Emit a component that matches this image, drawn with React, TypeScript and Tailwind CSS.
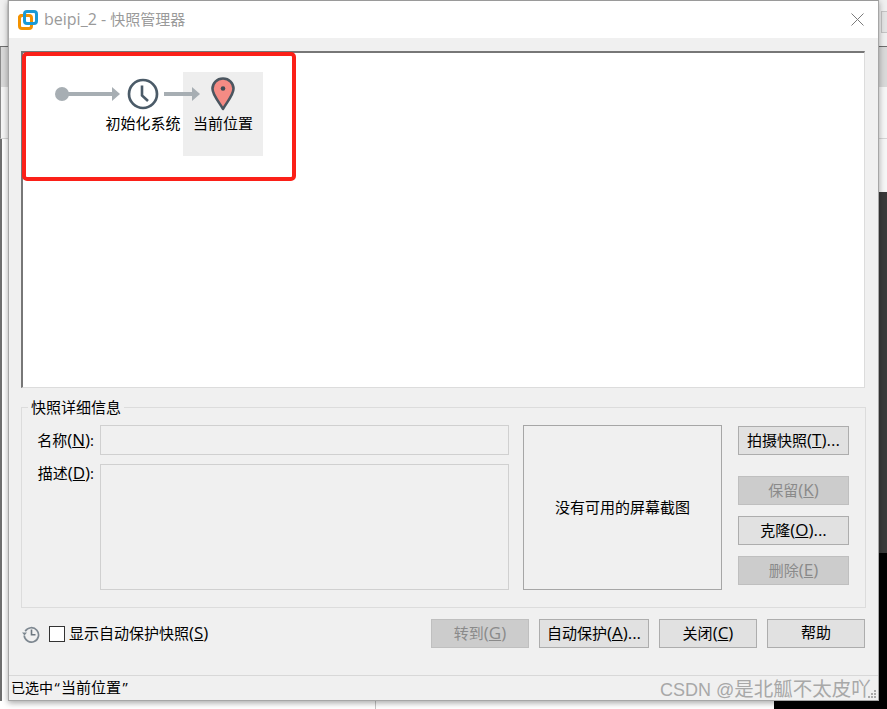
import React from "react";

function Btn({ w, disabled, children }: { w: string; disabled?: boolean; children: React.ReactNode }) {
  return (
    <div
      className={`${w} h-[29px] flex items-center justify-center border pb-[2px] text-[15px] leading-none ${
        disabled ? "bg-[#cccccc] border-[#bfbfbf] text-[#8a8a8a]" : "bg-[#e1e1e1] border-[#adadad] text-black"
      }`}
    >
      {children}
    </div>
  );
}

function Mn({ k, tail }: { k: string; tail?: string }) {
  return (
    <span className="text-[17px] leading-none">
      (<u>{k}</u>){tail}
    </span>
  );
}

function Logo() {
  return (
    <svg width="20" height="20" viewBox="0 0 20 20" className="shrink-0">
      <rect x="1.5" y="5.5" width="12" height="13" rx="2.5" fill="none" stroke="#f39200" strokeWidth="3" />
      <rect x="6.5" y="1.5" width="12" height="12" rx="2.5" fill="none" stroke="#1a9ad6" strokeWidth="3" />
      <path d="M1.5 9.5V8a2.5 2.5 0 0 1 2.5-2.5H5" fill="none" stroke="#f39200" strokeWidth="3" />
    </svg>
  );
}

function Clock() {
  return (
    <svg width="32" height="32" viewBox="0 0 32 32">
      <circle cx="16" cy="16" r="14" fill="#fff" stroke="#4b5b68" strokeWidth="2.7" />
      <path d="M15 7.5V17.5L21 23" fill="none" stroke="#4b5b68" strokeWidth="2.6" />
    </svg>
  );
}

function Pin() {
  return (
    <svg width="24" height="34" viewBox="0 0 24 34">
      <path
        d="M12 1.5C5.8 1.5 1.5 6.2 1.5 11.8C1.5 18 8.5 25.5 12 32C15.5 25.5 22.5 18 22.5 11.8C22.5 6.2 18.2 1.5 12 1.5Z"
        fill="#f58b84"
        stroke="#4b5660"
        strokeWidth="2.6"
        strokeLinejoin="round"
      />
      <circle cx="12" cy="11.5" r="2.3" fill="#3f4a54" />
    </svg>
  );
}

function HistoryIcon() {
  return (
    <svg width="18" height="18" viewBox="0 0 18 18" className="shrink-0">
      <path d="M3.2 6.2A7.2 7.2 0 1 1 2.2 10.5" fill="none" stroke="#7d8790" strokeWidth="1.7" />
      <path d="M0 7.5H5L2.5 10.5Z" fill="#7d8790" />
      <path d="M9.5 4.5V9.8H13.5" fill="none" stroke="#6d7780" strokeWidth="1.6" />
    </svg>
  );
}

function Grip() {
  return (
    <svg width="10" height="10" viewBox="0 0 10 10" className="absolute right-[1px] bottom-[1px]">
      <path d="M7 1h2v2H7zM4 4h2v2H4zM7 4h2v2H7zM1 7h2v2H1zM4 7h2v2H4zM7 7h2v2H7z" fill="#a9a9a9" />
    </svg>
  );
}

export default function App() {
  return (
    <div className="w-[887px] h-[709px] overflow-hidden relative bg-white font-['Open_Sans','Noto_Sans_CJK_SC',sans-serif] text-black">
      <div className="flex h-[701px]">
        {/* desktop behind, left */}
        <div className="w-[8px] flex flex-col shrink-0">
          <div className="h-[46px] bg-[#f0f0f0] border-r border-[#d8d8d8]" />
          <div className="h-[1px] bg-[#6e6e6e]" />
          <div className="h-[40px] bg-[#d9d9d9] border-l border-[#8a8a8a]" />
          <div className="h-[52px] bg-[#f6f6f6] border-l border-[#8a8a8a] border-b border-b-[#d5d5d5]" />
          <div className="flex-1 bg-white border-l-2 border-[#6e6e6e]" />
        </div>

        {/* dialog */}
        <div className="w-[871px] shrink-0 flex flex-col border border-[#a6a6a6] border-t-[#9a9a9a] bg-[#f0f0f0] shadow-[0_2px_6px_rgba(0,0,0,0.35)] relative">
          <div className="h-[37px] bg-white flex items-center pl-[9px] pr-[14px] shrink-0">
            <Logo />
            <span className="ml-[6px] pb-[2px] text-[15px] text-[#9a9a9a] whitespace-nowrap">
              <span className="text-[16px]">beipi_2 - </span>快照管理器
            </span>
            <svg width="13" height="13" viewBox="0 0 13 13" className="ml-auto">
              <path d="M0.5 0.5L12.5 12.5M12.5 0.5L0.5 12.5" stroke="#7b7b7b" strokeWidth="1" fill="none" />
            </svg>
          </div>

          <div className="flex-1 flex flex-col px-[12px] pt-[13px]">
            {/* snapshot canvas */}
            <div className="h-[337px] mr-[1px] bg-white border-t-2 border-l-2 border-[#777777] border-r border-b border-r-[#dcdcdc] border-b-[#dcdcdc] relative">
              <div className="flex pl-[80px] pt-[19px]">
                <div className="w-[80px] h-[84px] flex flex-col items-center pt-[6px]">
                  <Clock />
                  <span className="mt-[2px] text-[15px] leading-[22px] whitespace-nowrap">初始化系统</span>
                </div>
                <div className="w-[80px] h-[84px] bg-[#eeeeee] flex flex-col items-center pt-[5px]">
                  <Pin />
                  <span className="mt-[1px] text-[15px] leading-[22px] whitespace-nowrap">当前位置</span>
                </div>
              </div>
              {/* diagram edges */}
              <svg width="150" height="20" viewBox="0 0 150 20" className="absolute left-[30px] top-[31px]">
                <circle cx="9" cy="10" r="7" fill="#a7aeb3" />
                <path d="M9 10H60" stroke="#a7aeb3" strokeWidth="4" />
                <path d="M59 3L67 10L59 17Z" fill="#a7aeb3" />
                <path d="M111 10H140" stroke="#a7aeb3" strokeWidth="4" />
                <path d="M139 3L147 10L139 17Z" fill="#a7aeb3" />
              </svg>
            </div>

            {/* details */}
            <div className="mt-[19px] h-[201px] border border-[#dcdcdc] relative flex pt-[17px]">
              <span className="absolute left-[6px] -top-[12px] px-[3px] bg-[#f0f0f0] text-[15px] leading-[22px]">快照详细信息</span>
              <div className="w-[78px] shrink-0 flex flex-col items-end pr-[6px] text-[15px]">
                <span className="h-[30px] leading-[30px] whitespace-nowrap">
                  名称<Mn k="N" />:
                </span>
                <span className="mt-[8px] h-[20px] leading-[20px] whitespace-nowrap">
                  描述<Mn k="D" />:
                </span>
              </div>
              <div className="w-[409px] shrink-0 flex flex-col">
                <div className="h-[30px] border border-[#d0d0d0]" />
                <div className="mt-[9px] h-[126px] border border-[#d0d0d0]" />
              </div>
              <div className="ml-[14px] w-[199px] h-[165px] shrink-0 border border-[#a6a6a6] flex items-center justify-center text-[15px]">
                没有可用的屏幕截图
              </div>
              <div className="ml-[16px] w-[111px] shrink-0 flex flex-col pt-[1px]">
                <Btn w="w-[111px]">
                  <span>
                    拍摄快照<Mn k="T" tail="..." />
                  </span>
                </Btn>
                <div className="mt-[21px]">
                  <Btn w="w-[111px]" disabled>
                    <span>
                      保留<Mn k="K" />
                    </span>
                  </Btn>
                </div>
                <div className="mt-[11px]">
                  <Btn w="w-[111px]">
                    <span>
                      克隆<Mn k="O" tail="..." />
                    </span>
                  </Btn>
                </div>
                <div className="mt-[11px]">
                  <Btn w="w-[111px]" disabled>
                    <span>
                      删除<Mn k="E" />
                    </span>
                  </Btn>
                </div>
              </div>
            </div>

            {/* bottom row */}
            <div className="mt-[11px] h-[29px] flex items-center">
              <div className="ml-[1px]">
                <HistoryIcon />
              </div>
              <div className="ml-[9px] w-[16px] h-[16px] bg-white border border-[#333333] shrink-0" />
              <span className="ml-[4px] text-[15px] whitespace-nowrap">
                显示自动保护快照<Mn k="S" />
              </span>
              <div className="ml-auto mr-[1px] flex gap-[10px]">
                <Btn w="w-[98px]" disabled>
                  <span>
                    转到<Mn k="G" />
                  </span>
                </Btn>
                <Btn w="w-[110px]">
                  <span>
                    自动保护<Mn k="A" tail="..." />
                  </span>
                </Btn>
                <Btn w="w-[98px]">
                  <span>
                    关闭<Mn k="C" />
                  </span>
                </Btn>
                <Btn w="w-[98px]">帮助</Btn>
              </div>
            </div>
          </div>

          {/* status bar */}
          <div className="h-[25px] shrink-0 border-t border-[#d8d8d8] flex items-center pl-[2px] pb-[2px] text-[15px] whitespace-nowrap relative">
            <span className="text-[14px]">已选中</span>
            <span className="inline-block w-[8px] text-center">“</span>
            当前位置
            <span className="inline-block w-[8px] text-center">”</span>
            <Grip />
          </div>
        </div>

        {/* desktop behind, right */}
        <div className="flex-1 flex flex-col min-w-0">
          <div className="h-[46px] bg-[#f0f0f0] flex items-start justify-end pt-[11px]">
            <div className="w-[6px] h-[22px] border border-r-0 border-[#c4c4c4] bg-[#e4e4e4]" />
          </div>
          <div className="h-[1px] bg-[#6e6e6e]" />
          <div className="h-[40px] bg-[#d9d9d9]" />
          <div className="h-[52px] bg-[#f6f6f6] border-b border-[#d5d5d5]" />
          <div className="h-[53px] bg-[#f6f6f6]" />
          <div className="h-[361px] bg-[#3a3a3a]" />
          <div className="flex-1 bg-black" />
        </div>
      </div>

      {/* strip under the dialog */}
      <div className="h-[8px] flex">
        <div className="w-[376px] border-r border-[#c4c4c4] bg-white" />
        <div className="w-[398px] bg-white" />
        <div className="flex-1 bg-black" />
      </div>

      {/* image watermark */}
      <span className="absolute left-[660px] top-[677px] text-[18px] leading-[24px] text-[#a8a8a8] whitespace-nowrap font-['Liberation_Sans','Noto_Sans_CJK_SC',sans-serif]">
        CSDN @<span className="text-[19.5px]">是北觚不太皮吖</span>
      </span>

      {/* annotation drawn on the screenshot */}
      <div className="absolute left-[22px] top-[52px] w-[274px] h-[129px] border-4 border-[#fb2018] rounded-[5px]" />
    </div>
  );
}
